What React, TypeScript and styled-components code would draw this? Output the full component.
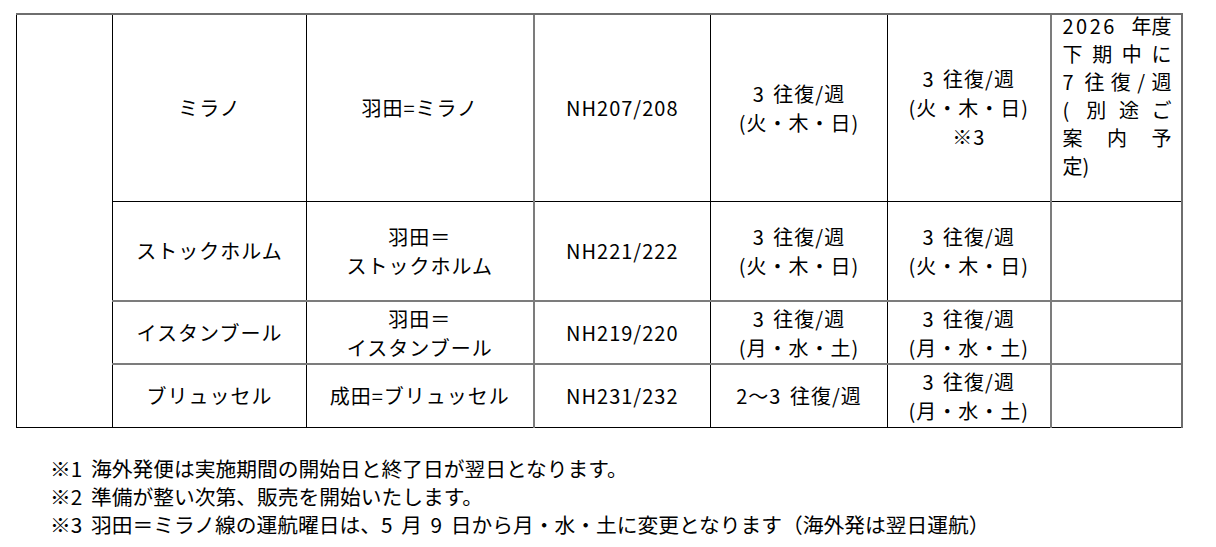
import React from "react";
import styled, { createGlobalStyle } from "styled-components";

const GlobalStyle = createGlobalStyle`
  html, body {
    margin: 0;
    padding: 0;
    background: #ffffff;
  }
  body {
    font-family: "Noto Sans CJK JP", "Noto Sans", sans-serif;
    color: #000000;
  }
`;

const Page = styled.div`
  padding: 13px 0 0 16px;
  width: 1216px;
  box-sizing: border-box;
`;

const Table = styled.table`
  border-collapse: collapse;
  table-layout: fixed;
  width: 1166px;
  font-size: 20px;
  line-height: 29px;
  letter-spacing: 1px;
  word-spacing: 3px;
`;

const Col = styled.col<{ $w: number }>`
  width: ${(p) => p.$w}px;
`;

const Row = styled.tr<{ $h: number }>`
  height: ${(p) => p.$h}px;
`;

const Cell = styled.td<{
  $topGray?: boolean;
  $leftGray?: boolean;
  $rightGray?: boolean;
  $rowGray?: boolean;
}>`
  border: 1px solid #000;
  ${(p) => (p.$topGray ? "border-top: 2px solid #6e6e6e;" : "")}
  ${(p) => (p.$rowGray ? "border-top: 2px solid #7c7c7c;" : "")}
  ${(p) => (p.$leftGray ? "border-left: 2px solid #7c7c7c;" : "")}
  ${(p) => (p.$rightGray ? "border-right: 2px solid #6e6e6e;" : "")}
  text-align: center;
  vertical-align: middle;
  padding: 0 6px;
  white-space: nowrap;
`;

const NoteCell = styled(Cell)`
  text-align: left;
  vertical-align: top;
  padding: 0 9px 0 11px;
  line-height: 28px;
  letter-spacing: 0;
  word-spacing: 0;
`;

const NoteBlock = styled.div`
  margin-top: -3px;
`;

const Line = styled.span`
  display: block;
`;

const JustLine = styled.span<{ $last?: boolean }>`
  display: block;
  text-align: justify;
  text-align-last: ${(p) => (p.$last ? "left" : "justify")};
`;

const SplitLine = styled.span`
  display: flex;
  justify-content: space-between;
`;

const Year = styled.span`
  letter-spacing: 2.5px;
`;

const Notes = styled.div`
  margin: 26px 0 0 34px;
  font-size: 20.75px;
  line-height: 28px;
  word-spacing: 4px;
  white-space: nowrap;
`;

type RowData = {
  city: string;
  route: string[];
  flight: string;
  cur: string[];
  next: string[];
  h: number;
  gray?: boolean;
};

const rows: RowData[] = [
  {
    city: "ストックホルム",
    route: ["羽田＝", "ストックホルム"],
    flight: "NH221/222",
    cur: ["3 往復/週", "(火・木・日)"],
    next: ["3 往復/週", "(火・木・日)"],
    h: 100,
  },
  {
    city: "イスタンブール",
    route: ["羽田＝", "イスタンブール"],
    flight: "NH219/220",
    cur: ["3 往復/週", "(月・水・土)"],
    next: ["3 往復/週", "(月・水・土)"],
    h: 63,
    gray: true,
  },
  {
    city: "ブリュッセル",
    route: ["成田=ブリュッセル"],
    flight: "NH231/232",
    cur: ["2～3 往復/週"],
    next: ["3 往復/週", "(月・水・土)"],
    h: 63,
    gray: true,
  },
];

const noteLines = ["下期中に", "7 往復/週", "( 別途ご", "案内予", "定)"];

const widths = [96, 194, 227, 177, 177, 163, 131];

export default function App() {
  return (
    <>
      <GlobalStyle />
      <Page>
        <Table>
          <colgroup>
            {widths.map((w, i) => (
              <Col key={i} $w={w} />
            ))}
          </colgroup>
          <tbody>
            <Row $h={187}>
              <Cell rowSpan={4} $topGray />
              <Cell $topGray>ミラノ</Cell>
              <Cell $topGray>羽田=ミラノ</Cell>
              <Cell $topGray $leftGray>NH207/208</Cell>
              <Cell $topGray>
                <Line>3 往復/週</Line>
                <Line>(火・木・日)</Line>
              </Cell>
              <Cell $topGray>
                <Line>3 往復/週</Line>
                <Line>(火・木・日)</Line>
                <Line>※3</Line>
              </Cell>
              <NoteCell $topGray $leftGray $rightGray>
                <NoteBlock>
                  <SplitLine>
                    <Year>2026</Year>
                    <span>年度</span>
                  </SplitLine>
                  {noteLines.map((l, i) => (
                    <JustLine key={i} $last={i === noteLines.length - 1}>
                      {l}
                    </JustLine>
                  ))}
                </NoteBlock>
              </NoteCell>
            </Row>
            {rows.map((r) => (
              <Row key={r.flight} $h={r.h}>
                <Cell $rowGray={r.gray}>{r.city}</Cell>
                <Cell $rowGray={r.gray}>
                  {r.route.map((t) => (
                    <Line key={t}>{t}</Line>
                  ))}
                </Cell>
                <Cell $rowGray={r.gray} $leftGray>
                  {r.flight}
                </Cell>
                <Cell $rowGray={r.gray}>
                  {r.cur.map((t) => (
                    <Line key={t}>{t}</Line>
                  ))}
                </Cell>
                <Cell $rowGray={r.gray}>
                  {r.next.map((t) => (
                    <Line key={t}>{t}</Line>
                  ))}
                </Cell>
                <Cell $rowGray={r.gray} $leftGray $rightGray />
              </Row>
            ))}
          </tbody>
        </Table>
        <Notes>
          <Line>※1 海外発便は実施期間の開始日と終了日が翌日となります。</Line>
          <Line>※2 準備が整い次第、販売を開始いたします。</Line>
          <Line>※3 羽田＝ミラノ線の運航曜日は、5 月 9 日から月・水・土に変更となります（海外発は翌日運航）</Line>
        </Notes>
      </Page>
    </>
  );
}
